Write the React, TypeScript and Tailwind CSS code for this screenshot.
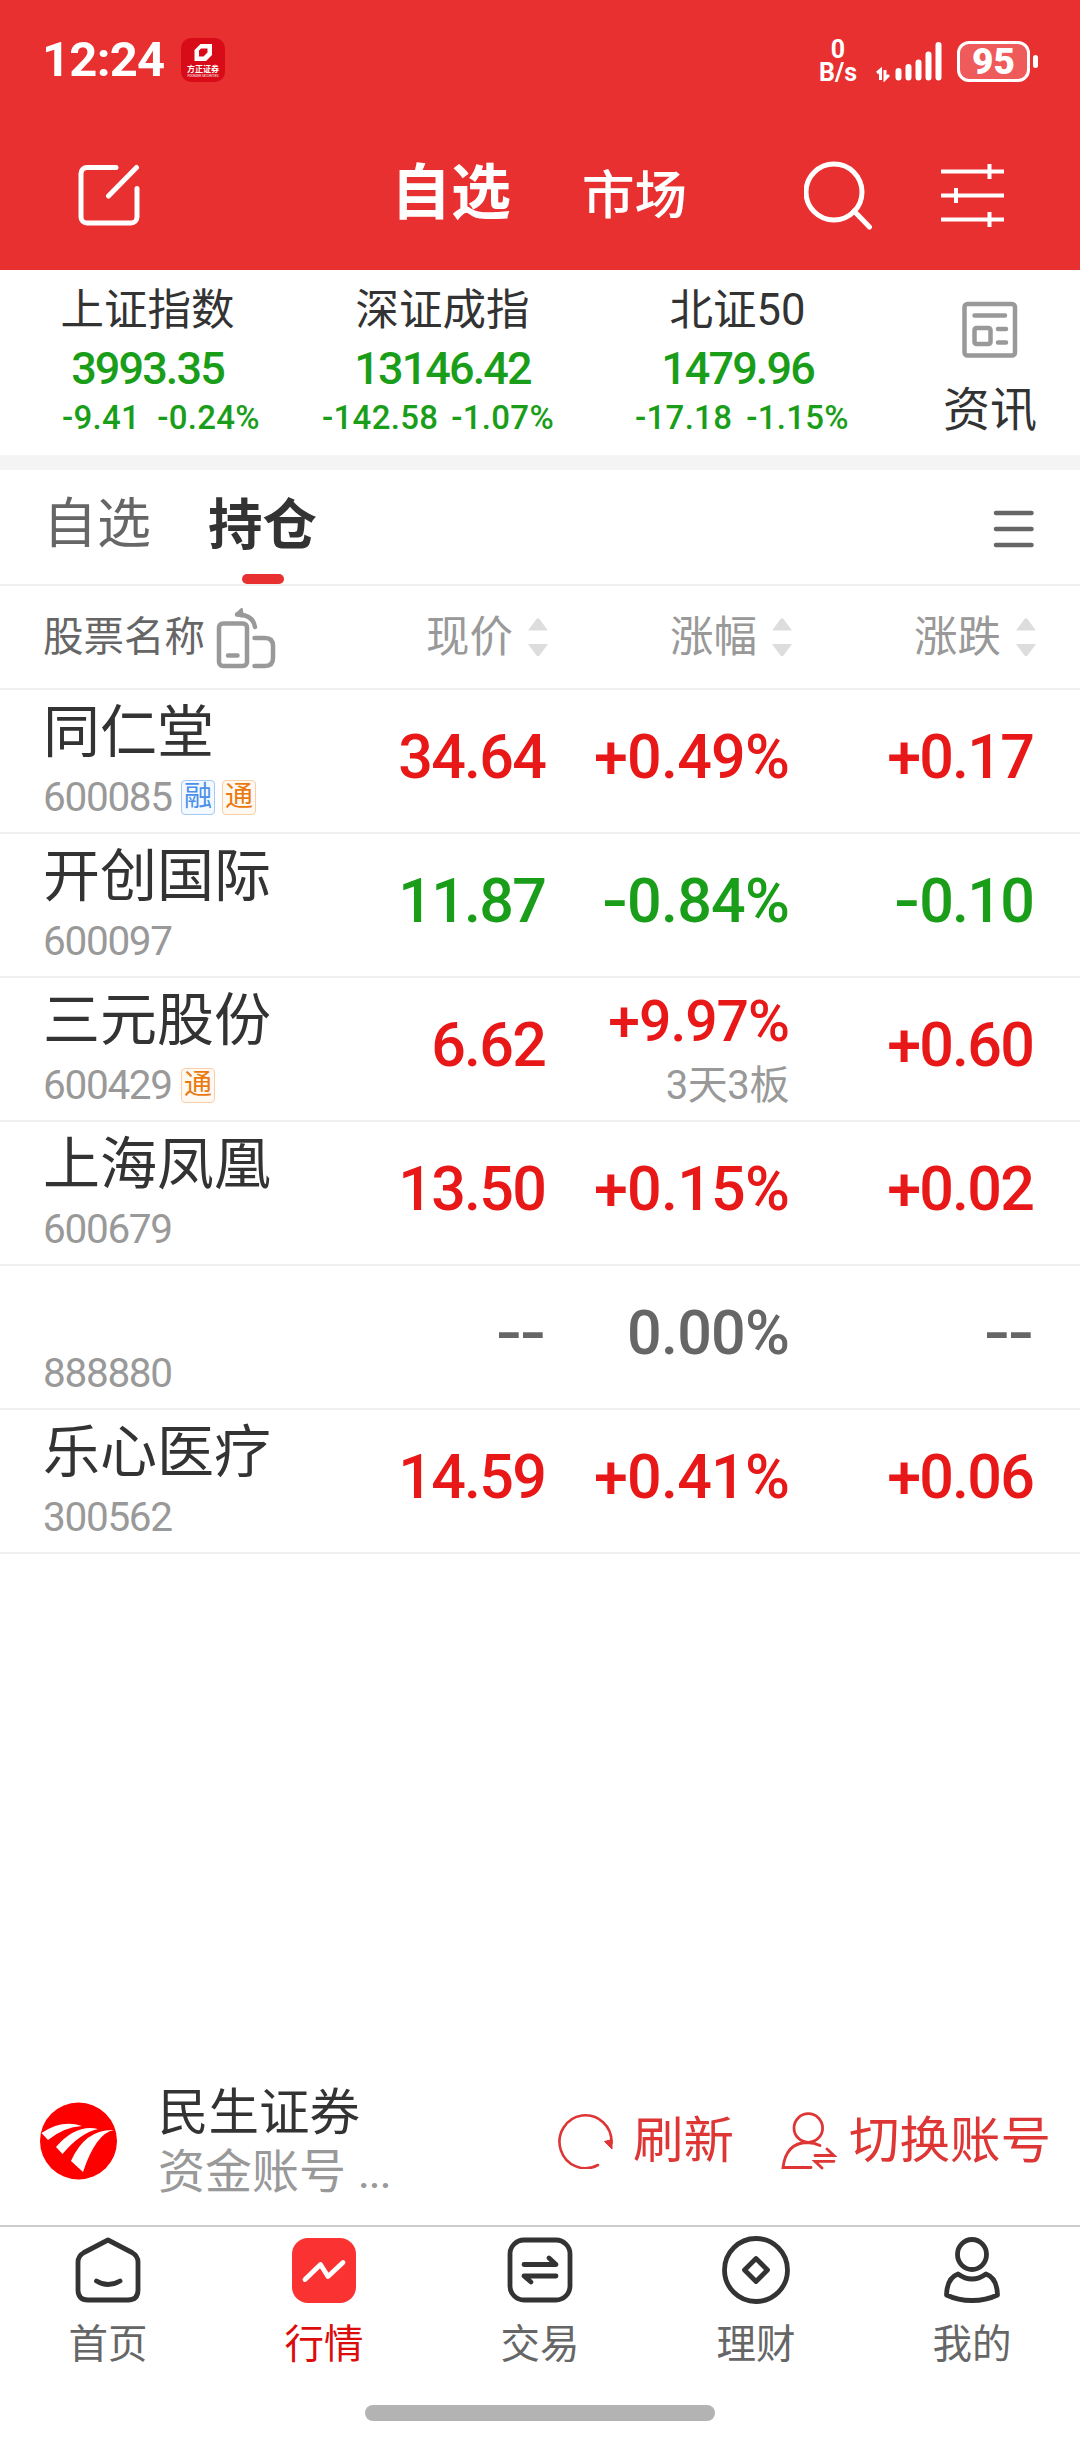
import type { ReactNode } from 'react';

type Tone = 'up' | 'down' | 'flat';

const tones: Record<Tone, string> = {
  up: 'text-[#e81818]',
  down: 'text-[#1a9e1a]',
  flat: 'text-[#666]',
};

const indices = [
  { name: '上证指数', value: '3993.35', diff: '-9.41', pct: '-0.24%', pad: 'pl-[62px]', gap: 'gap-[17px]' },
  { name: '深证成指', value: '13146.42', diff: '-142.58', pct: '-1.07%', pad: 'pl-[27px]', gap: 'gap-[13px]' },
  { name: '北证50', value: '1479.96', diff: '-17.18', pct: '-1.15%', pad: 'pl-[45px]', gap: 'gap-[14px]' },
];

type Stock = {
  name: string;
  code: string;
  tags: string[];
  price: string;
  pct: string;
  diff: string;
  tone: Tone;
  note?: string;
};

const stocks: Stock[] = [
  { name: '同仁堂', code: '600085', tags: ['融', '通'], price: '34.64', pct: '+0.49%', diff: '+0.17', tone: 'up' },
  { name: '开创国际', code: '600097', tags: [], price: '11.87', pct: '-0.84%', diff: '-0.10', tone: 'down' },
  { name: '三元股份', code: '600429', tags: ['通'], price: '6.62', pct: '+9.97%', diff: '+0.60', tone: 'up', note: '3天3板' },
  { name: '上海凤凰', code: '600679', tags: [], price: '13.50', pct: '+0.15%', diff: '+0.02', tone: 'up' },
  { name: '', code: '888880', tags: [], price: '--', pct: '0.00%', diff: '--', tone: 'flat' },
  { name: '乐心医疗', code: '300562', tags: [], price: '14.59', pct: '+0.41%', diff: '+0.06', tone: 'up' },
];

const StatusBar = () => (
  <div className="flex h-[120px] items-start justify-between pt-[38px] pl-[42px] pr-[42px] text-white">
    <div className="flex items-start">
      <span className="w-[139px] text-[49px] leading-[43px] font-bold tracking-[-0.8px]">12:24</span>
      <svg width="44" height="44" viewBox="0 0 44 44">
        <rect width="44" height="44" rx="10" fill="#d80c18" />
        <path d="M13.500 12 L19.500 6 H31 V17 L25 23 H13.500 Z M18 12.500 V18.500 H22.500 L26.500 14.500 V10.500 H20 Z" fill="#fff" fillRule="evenodd" />
        <text x="22" y="34" textAnchor="middle" fontSize="8" fontWeight="700" fill="#fff">方正证券</text>
        <text x="22" y="38.500" textAnchor="middle" fontSize="3" textLength="31" fill="#fff">FOUNDER SECURITIES</text>
      </svg>
    </div>
    <div className="flex items-start">
      <div className="flex w-[38px] flex-col items-center text-[25px] leading-[23px] font-bold">
        <span>0</span>
        <span>B/s</span>
      </div>
      <svg className="ml-[19px]" width="66" height="44" viewBox="0 0 66 44" fill="none" stroke="#fff">
        <path d="M1 35 L4.500 32 V42 M9 32 V41 L13 37" strokeWidth="3" />
        <path d="M22.500 33 V39.500 M32.500 29 V39.500 M42.500 24.500 V39.500 M52.500 16.500 V39.500 M62.500 7 V39.500" strokeWidth="6" strokeLinecap="round" />
      </svg>
      <div className="ml-[15px] mt-[3px] flex items-center">
        <div className="flex h-[41px] w-[73px] items-center justify-center rounded-[12px] border-[3px] border-white bg-[#ef5a5a] text-[37px] leading-[37px] font-black">
          95
        </div>
        <div className="ml-[3px] h-[13px] w-[5px] rounded-full bg-white" />
      </div>
    </div>
  </div>
);

const NavBar = () => (
  <div className="flex h-[150px] text-white">
    <div className="flex w-[391px] pt-[44px] pl-[78px]">
      <svg width="62" height="62" viewBox="0 0 62 62" fill="none" stroke="#fff" strokeWidth="5" strokeLinecap="round" strokeLinejoin="round">
        <path d="M38 3.500 H9 A6 6 0 0 0 3 9.500 V53 A6 6 0 0 0 9 59 H53 A6 6 0 0 0 59 53 V24.500" />
        <path d="M58.500 3.500 L30.500 32" />
      </svg>
    </div>
    <div className="w-[191px] pt-[44px] text-[60px] leading-[60px] font-bold">自选</div>
    <div className="w-[222px] pt-[46px] text-[52.5px] leading-[60px] font-medium">市场</div>
    <svg className="mt-[40px]" width="70" height="70" viewBox="0 0 70 70" fill="none" stroke="#fff" strokeWidth="5">
      <circle cx="30" cy="32" r="28" />
      <path d="M50 51 L65.500 67" strokeLinecap="round" />
    </svg>
    <svg className="ml-[67px] mt-[43px]" width="63" height="66" viewBox="0 0 63 66" fill="none" stroke="#fff" strokeWidth="4">
      <path d="M0 8.500 H63 M0 32.500 H63 M0 56.500 H63 M48.500 1 V16 M15 25 V40 M48.500 49 V64" />
    </svg>
  </div>
);

const IndexStrip = () => (
  <div className="flex h-[185px] bg-white">
    {indices.map((item) => (
      <div key={item.name} className="flex w-[295px] flex-col pt-[14px] text-[#1a9e1a]">
        <span className="text-center text-[43.5px] leading-[54px] text-[#333]">{item.name}</span>
        <span className="text-center text-[45px] leading-[62px] font-medium tracking-[-1.9px]">{item.value}</span>
        <div className={`flex text-[33px] leading-[36px] font-medium tracking-[0.3px] ${item.pad} ${item.gap}`}>
          <span>{item.diff}</span>
          <span>{item.pct}</span>
        </div>
      </div>
    ))}
    <div className="ml-[15px] flex w-[180px] flex-col items-center pt-[31px]">
      <svg width="56" height="57" viewBox="0 0 56 57" fill="none" stroke="#999" strokeWidth="4.500" strokeLinecap="round">
        <rect x="2.500" y="3" width="50.500" height="51.500" rx="3" />
        <path d="M12.500 14.500 H43 M36 28 H44 M36 41.500 H44" />
        <rect x="12.500" y="27" width="16" height="16" rx="2" />
      </svg>
      <span className="mt-[24px] text-[47px] leading-[56px] text-[#333]">资讯</span>
    </div>
  </div>
);

const Tabs = () => (
  <div className="flex h-[116px] border-b-2 border-[#efefef] pl-[43px]">
    <span className="w-[164px] pt-[24px] text-[54px] leading-[62px] text-[#666]">自选</span>
    <div className="flex w-[111px] flex-col items-center pt-[24px]">
      <span className="text-[54.5px] leading-[62px] font-bold text-[#333]">持仓</span>
      <div className="mt-[18px] h-[10px] w-[42px] rounded-full bg-[#e83030]" />
    </div>
    <svg className="mt-[39px] ml-[675px]" width="42" height="40" viewBox="0 0 42 40" stroke="#666" strokeWidth="4.500" strokeLinecap="round">
      <path d="M3 4 H38.500 M3 20 H38.500 M3 36 H38.500" />
    </svg>
  </div>
);

const SortHeader = ({ children }: { children: ReactNode }) => (
  <div className="flex w-[244px] items-center justify-end text-[#999]">
    <span className="pt-[2px] text-[43.5px] leading-[60px]">{children}</span>
    <svg className="ml-[15px]" width="20" height="40" viewBox="0 0 20 40" fill="#ddd">
      <path d="M0 13.500 L8.500 2 Q10 0.500 11.500 2 L20 13.500 Z M0 27 L8.500 38.500 Q10 40 11.500 38.500 L20 27 Z" />
    </svg>
  </div>
);

const TableHeader = () => (
  <div className="flex h-[104px] items-center border-b-2 border-[#efefef]">
    <div className="flex w-[304px] items-center pl-[43px]">
      <span className="text-[40.5px] leading-[60px] text-[#666]">股票名称</span>
      <svg className="ml-[10px]" width="61" height="64" viewBox="0 0 61 64" fill="none" stroke="#999" strokeWidth="4.500" strokeLinecap="round" strokeLinejoin="round">
        <rect x="4" y="18.500" width="28" height="42.500" rx="4" />
        <path d="M13 50.500 H22.500 M39.500 33 H50 Q58 33 58 41 V53 Q58 61 50 61 H39.500" />
        <path d="M40 22 Q38 9.500 22 9.500" />
        <path d="M26.500 4.500 L21.500 9.500 L27 11 Z" fill="#999" strokeWidth="3" />
      </svg>
    </div>
    <SortHeader>现价</SortHeader>
    <SortHeader>涨幅</SortHeader>
    <SortHeader>涨跌</SortHeader>
  </div>
);

// Hyphens get a wider cell so signs line up with the plus of other rows.
const Num = ({ value }: { value: string }) => (
  <>
    {value.split('').map((char, i) =>
      char === '-' ? (
        <span key={i} className="inline-block w-[24px] scale-x-125 text-center tracking-normal">
          -
        </span>
      ) : (
        char
      ),
    )}
  </>
);

const Tag = ({ label }: { label: string }) => (
  <span
    className={`flex h-[35px] w-[34px] items-center justify-center rounded-[4px] border text-[28px] leading-[32px] ${
      label === '融' ? 'border-[#a5c8f5] bg-[#f4f9ff] text-[#4a90e8]' : 'border-[#f8cfa8] bg-[#fff9f2] text-[#e87a10]'
    }`}
  >
    {label}
  </span>
);

const StockRow = ({ stock }: { stock: Stock }) => (
  <div className="flex h-[144px] border-b-2 border-[#efefef]">
    <div className="w-[301px] pt-[10px] pl-[43px]">
      <div className="h-[66px] text-[57px] leading-[66px] whitespace-nowrap text-[#333]">{stock.name}</div>
      <div className="mt-[10px] flex h-[42px] items-center gap-[7px] text-[#999]">
        <span className="w-[131px] text-[40.5px] leading-[42px] tracking-[-1.3px]">{stock.code}</span>
        {stock.tags.map((tag) => (
          <Tag key={tag} label={tag} />
        ))}
      </div>
    </div>
    <div className={`flex pt-[30px] text-right text-[61px] leading-[74px] font-medium tracking-[-1.8px] ${tones[stock.tone]}`}>
      <span className="w-[244px]">
        <Num value={stock.price} />
      </span>
      {stock.note ? (
        <div className="-mt-[19px] w-[244px] text-[57px] tracking-[-1px]">
          <div className="leading-[66px]">{stock.pct}</div>
          <div className="text-[40px] leading-[62px] font-normal tracking-[-0.4px] text-[#999]">{stock.note}</div>
        </div>
      ) : (
        <span className="w-[244px] tracking-[-0.8px]">
          <Num value={stock.pct} />
        </span>
      )}
      <span className="w-[244px]">
        <Num value={stock.diff} />
      </span>
    </div>
  </div>
);

const AccountBar = () => (
  <div className="flex h-[175px] items-start bg-white">
    <svg className="mt-[52px] ml-[40px]" width="77" height="78" viewBox="0 0 77 78">
      <circle cx="38.500" cy="39" r="38.500" fill="#fe0000" />
      <path d="M1.500 31 Q22 17 42 24 Q24 25 8 38 Z" fill="#fff" />
      <path d="M16 45 Q36 22 58 27 Q40 31 22.500 52 Z" fill="#fff" />
      <path d="M31 59 Q45 27 74 28 Q56 31 43 70 Z" fill="#fff" />
    </svg>
    <div className="ml-[41px] flex w-[400px] flex-col pt-[33px]">
      <span className="text-[50.5px] leading-[60px] text-[#333]">民生证券</span>
      <span className="text-[47px] leading-[58px] text-[#999]">
        资金账号 <span className="tracking-[-1.5px]">...</span>
      </span>
    </div>
    <div className="flex items-center pt-[58px] text-[50.5px] leading-[62px] text-[#de3535]">
      <svg width="56" height="58" viewBox="0 0 56 58" fill="none" stroke="#de3535" strokeWidth="2.600">
        <path d="M40 54 A26 26.500 0 1 1 53.500 32" strokeLinecap="round" />
        <path d="M46.500 30.500 L54 28.500 V38 Z" fill="#de3535" strokeWidth="1" />
      </svg>
      <span className="ml-[19px] w-[148px] pt-[2px]">刷新</span>
      <svg width="56" height="60" viewBox="0 -1 56 60" fill="none" stroke="#de3535" strokeWidth="2.800" strokeLinecap="round">
        <circle cx="27.300" cy="17" r="14.300" />
        <path d="M30 56.500 H2 Q5 32 26 31.500 Q33 31.500 39 34.500 M34 44.500 H53 L46 38 M53 50.300 H34 L41 57" />
      </svg>
      <span className="ml-[12px] pt-[2px]">切换账号</span>
    </div>
  </div>
);

const tabItems: { label: string; icon: ReactNode; active?: boolean }[] = [
  {
    label: '首页',
    icon: (
      <>
        <path d="M34 4 L58 16.500 Q64 20 64 26 V54 Q64 64 54 64 H14 Q4 64 4 54 V26 Q4 20 10 16.500 Z" />
        <path d="M22.500 45 Q34 52 46 45" />
      </>
    ),
  },
  {
    label: '行情',
    active: true,
    icon: (
      <>
        <rect x="2" y="2" width="64" height="65" rx="16" fill="#fb3232" stroke="none" />
        <path d="M15 43.500 L30.500 28.500 L38 40.500 L53 26.500" stroke="#fff" />
      </>
    ),
  },
  {
    label: '交易',
    icon: (
      <>
        <rect x="4" y="4" width="60" height="60" rx="14" />
        <path d="M18 28.500 H50 L43 22 M50 40 H18 L25 46" />
      </>
    ),
  },
  {
    label: '理财',
    icon: (
      <>
        <circle cx="34" cy="34" r="31.500" />
        <path d="M34 22.500 L45.500 34 L34 45.500 L22.500 34 Z" />
      </>
    ),
  },
  {
    label: '我的',
    icon: (
      <>
        <ellipse cx="34" cy="18.500" rx="14.500" ry="15" />
        <path d="M20 38 Q34 48 48 38 Q59 42 59.500 59 Q48 64.500 34 64.500 Q20 64.500 8.500 59 Q9 42 20 38 Z" />
      </>
    ),
  },
];

const BottomNav = () => (
  <div className="flex h-[215px] flex-col items-center border-t-2 border-[#ccc] bg-white">
    <div className="flex w-full">
      {tabItems.map((tab) => (
        <div key={tab.label} className="flex w-[216px] flex-col items-center pt-[9px]">
          <svg width="68" height="69" viewBox="0 0 68 69" fill="none" stroke="#333" strokeWidth="4.800" strokeLinecap="round" strokeLinejoin="round">
            {tab.icon}
          </svg>
          <span className={`mt-[10px] text-[39.5px] leading-[60px] ${tab.active ? 'text-[#dc0c0c]' : 'text-[#666]'}`}>
            {tab.label}
          </span>
        </div>
      ))}
    </div>
    <div className="mt-[30px] h-[16px] w-[350px] rounded-full bg-[#b3b3b3]" />
  </div>
);

export default function App() {
  return (
    <div className="flex h-[2440px] w-[1080px] flex-col overflow-hidden bg-white font-['Roboto','Noto_Sans_CJK_SC',sans-serif]">
      <header className="h-[270px] shrink-0 bg-[#e83030]">
        <StatusBar />
        <NavBar />
      </header>
      <IndexStrip />
      <div className="h-[15px] shrink-0 bg-[#f4f4f4]" />
      <Tabs />
      <TableHeader />
      <main className="grow">
        {stocks.map((stock) => (
          <StockRow key={stock.code} stock={stock} />
        ))}
      </main>
      <AccountBar />
      <BottomNav />
    </div>
  );
}
